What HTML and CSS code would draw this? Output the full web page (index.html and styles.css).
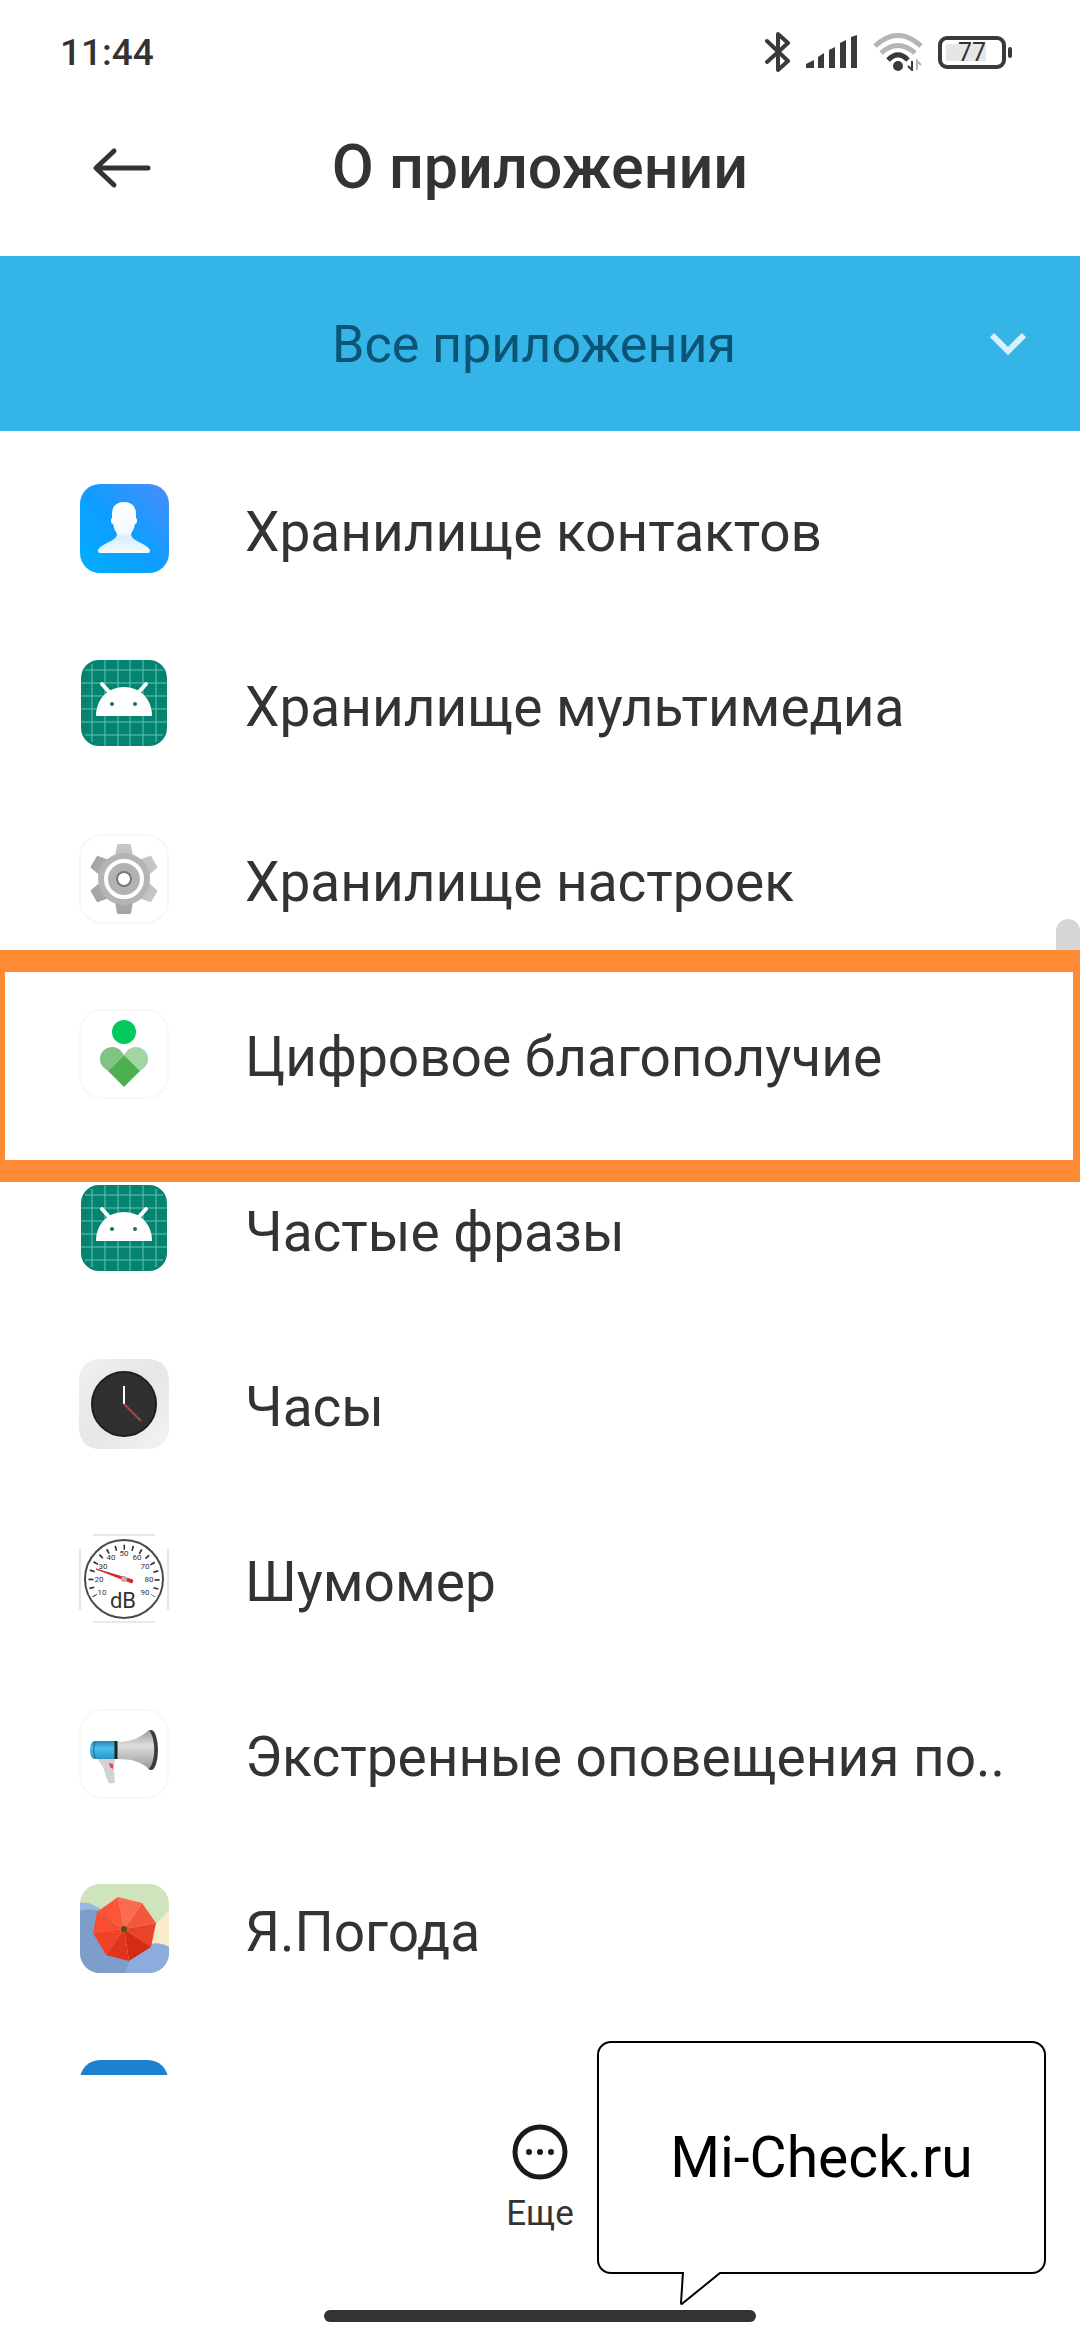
FILE: index.html
```html
<!DOCTYPE html>
<html lang="ru">
<head>
    <meta charset="UTF-8">
    <meta name="viewport" content="width=device-width, initial-scale=1">
    <title>О приложении</title>
    <link rel="stylesheet" href="styles.css">
</head>
<body>
    <div class="status-bar">
        <span class="time">11:44</span>
        <div class="status-icons">
            <svg class="bluetooth" width="26" height="44" viewBox="0 0 26 44">
                <path d="M2 11 L23 31 L13 40 V4 L23 13 L2 32" fill="none" stroke="#3a3a3a" stroke-width="4" stroke-linejoin="round" stroke-linecap="round"/>
            </svg>
            <svg class="signal" width="52" height="34" viewBox="0 0 52 34" fill="#3a3a3a">
                <path d="M0 29 L8 25 V33 H0z M12 22 L18 18 V33 H12z M23 15 L29 12 V33 H23z M34 8 L40 5 V33 H34z M45 2 L51 0 V33 H45z"/>
            </svg>
            <svg class="wifi" width="50" height="38" viewBox="0 0 50 38" fill="none" stroke-width="5">
                <path d="M2 13 Q25 -8 48 13" stroke="#b5b5b5"/>
                <path d="M8 20 Q25 5 42 20" stroke="#b5b5b5"/>
                <path d="M15 27 Q25 17 35 27" stroke="#3a3a3a"/>
                <circle cx="25" cy="33" r="5" fill="#3a3a3a" stroke="none"/>
                <path d="M39 28 V37 L35 33" stroke="#3a3a3a" stroke-width="2"/>
                <path d="M44 37 V28 L48 32" stroke="#b5b5b5" stroke-width="2"/>
            </svg>
            <div class="battery">77</div>
        </div>
    </div>

    <header class="title-bar">
        <button type="button" class="back" aria-label="Назад">
            <svg width="60" height="44" viewBox="0 0 60 44" fill="none" stroke="#333" stroke-width="5" stroke-linecap="round" stroke-linejoin="round">
                <path d="M22 5 L4 22 L22 39 M5 22 H56"/>
            </svg>
        </button>
        <h1>О приложении</h1>
    </header>

    <div class="filter">
        <select class="filter-select" aria-label="Фильтр приложений">
            <option>Все приложения</option>
        </select>
        <svg class="chevron" width="36" height="24" viewBox="0 0 36 24">
            <path d="M2 3 L18 19 L34 3" fill="none" stroke="#d9f1fc" stroke-width="6"/>
        </svg>
    </div>

    <main class="list-wrap">
        <div class="scroll-thumb"></div>
        <ul class="app-list">
            <li><a class="app" href="#">
                <svg class="app-icon" viewBox="0 0 90 90">
                    <defs>
                        <linearGradient id="contactBg" x1="0" y1="1" x2="1" y2="0">
                            <stop offset="0" stop-color="#00aeff"/>
                            <stop offset="0.5" stop-color="#0f9dff"/>
                            <stop offset="1" stop-color="#4c8dfb"/>
                        </linearGradient>
                        <linearGradient id="contactFg" x1="0" y1="0" x2="0" y2="1">
                            <stop offset="0" stop-color="#fff"/>
                            <stop offset="0.6" stop-color="#f2faff"/>
                            <stop offset="0.7" stop-color="#d8eefd"/>
                            <stop offset="1" stop-color="#f4fbff"/>
                        </linearGradient>
                    </defs>
                    <rect x="1" y="0" width="89" height="89" rx="20" fill="url(#contactBg)"/>
                    <path d="M45 18 C53 18 57 23 57 30 V34 C59 35 58 40 56 40 C55 45 53 48 52 50 C52 57 67 59 71 66 Q71 69 69 69 H21 Q19 69 19 66 C23 59 38 57 38 50 C37 48 35 45 34 40 C32 40 31 35 33 34 V30 C33 23 37 18 45 18z" fill="url(#contactFg)"/>
                </svg>
                <span class="app-name">Хранилище контактов</span>
            </a></li>
            <li><a class="app" href="#">
                <svg class="app-icon" viewBox="0 0 90 90">
                    <g id="android">
                        <rect x="2" y="1" width="86" height="86" rx="18" fill="#058371"/>
                        <path d="M13 5 V83 M26 1 V87 M39 1 V87 M51 1 V87 M64 1 V87 M77 5 V83 M6 11 H84 M2 24 H88 M2 37 H88 M2 50 H88 M2 63 H88 M6 76 H84" stroke="#67c4b3" stroke-width="1"/>
                        <path d="M17 57 C17 39 30 28 45 28 S73 39 73 57z" fill="#fff"/>
                        <path d="M23 25 L31 34 M67 25 L59 34" stroke="#fff" stroke-width="4" stroke-linecap="round"/>
                        <circle cx="33" cy="45" r="2" fill="#1f6f62"/>
                        <circle cx="56" cy="45" r="2" fill="#1f6f62"/>
                    </g>
                </svg>
                <span class="app-name">Хранилище мультимедиа</span>
            </a></li>
            <li><a class="app" href="#">
                <svg class="app-icon" viewBox="0 0 90 90">
                    <defs>
                        <linearGradient id="gearBg" x1="0" y1="0" x2="0" y2="1">
                            <stop offset="0" stop-color="#c6c6c6"/>
                            <stop offset="1" stop-color="#a4a4a4"/>
                        </linearGradient>
                    </defs>
                    <rect x="1" y="1" width="88" height="88" rx="22" fill="#fff" stroke="#f7f7f7" stroke-width="2"/>
                    <g fill="url(#gearBg)">
                        <path id="tooth" d="M36 22 L38 11 Q38 10 40 10 H50 Q52 10 52 11 L54 22 V68 L52 79 Q52 80 50 80 H40 Q38 80 38 79 L36 68z"/>
                        <use href="#tooth" transform="rotate(60 45 45)"/>
                        <use href="#tooth" transform="rotate(120 45 45)"/>
                    </g>
                    <circle cx="45" cy="45" r="26" fill="#b4b4b4"/>
                    <circle cx="45" cy="45" r="18" fill="#b2b2b2" stroke="#fff" stroke-width="4"/>
                    <circle cx="45" cy="45" r="7" fill="#fff" stroke="#777" stroke-width="2"/>
                </svg>
                <span class="app-name">Хранилище настроек</span>
            </a></li>
            <li class="marked"><a class="app" href="#">
                <svg class="app-icon" viewBox="0 0 90 90">
                    <rect x="1" y="1" width="88" height="88" rx="22" fill="#fff" stroke="#f8f8f8" stroke-width="2"/>
                    <circle cx="45" cy="23" r="12" fill="#04c95b"/>
                    <path d="M45 46 L42 42 A12 12 0 0 0 24 58 L29 62z" fill="#80c483"/>
                    <path d="M45 46 L48 42 A12 12 0 0 1 66 58 L61 62z" fill="#a2d4a4"/>
                    <path d="M45 46 L61 62 L45 78 L29 62z" fill="#4caf50"/>
                </svg>
                <span class="app-name">Цифровое благополучие</span>
            </a></li>
            <li><a class="app" href="#">
                <svg class="app-icon" viewBox="0 0 90 90"><use href="#android"/></svg>
                <span class="app-name">Частые фразы</span>
            </a></li>
            <li><a class="app" href="#">
                <svg class="app-icon" viewBox="0 0 90 90">
                    <defs>
                        <linearGradient id="clockBg" x1="0" y1="0" x2="1" y2="1">
                            <stop offset="0" stop-color="#f0f0f0"/>
                            <stop offset="0.5" stop-color="#e6e6e6"/>
                            <stop offset="1" stop-color="#f3f3f3"/>
                        </linearGradient>
                    </defs>
                    <rect width="90" height="90" rx="20" fill="url(#clockBg)"/>
                    <circle cx="45" cy="45" r="32" fill="#303030" stroke="#1e1e1e" stroke-width="2"/>
                    <path d="M45 45 V27" stroke="#fff" stroke-width="2"/>
                    <path d="M45 45 L62 62" stroke="#b04048" stroke-width="2"/>
                </svg>
                <span class="app-name">Часы</span>
            </a></li>
            <li><a class="app" href="#">
                <svg class="app-icon" viewBox="0 0 90 90">
                    <rect x="1" y="1" width="88" height="88" rx="20" fill="#fff"/>
                    <path d="M14 1 H76 M14 88 H76 M1 14 V76 M89 14 V76" stroke="#cfcfcf" stroke-width="1"/>
                    <circle cx="45" cy="45" r="39" fill="#fff" stroke="#4a4a4a" stroke-width="2"/>
                    <path d="M16 62 A33 33 0 1 1 74 62" fill="none" stroke="#333" stroke-width="5" pathLength="240" stroke-dasharray="3 12" stroke-dashoffset="1"/>
                    <g class="dial">
                        <text x="23" y="61">10</text>
                        <text x="20" y="48">20</text>
                        <text x="24" y="35">30</text>
                        <text x="32" y="26">40</text>
                        <text x="45" y="22">50</text>
                        <text x="58" y="26">60</text>
                        <text x="66" y="35">70</text>
                        <text x="70" y="48">80</text>
                        <text x="66" y="61">90</text>
                    </g>
                    <path d="M17 35 L54 46 L53 49z" fill="#d9252c" stroke="#d9252c"/>
                    <circle cx="45" cy="45" r="3" fill="#c9a5a5"/>
                    <text class="dial-unit" x="44" y="74">dB</text>
                </svg>
                <span class="app-name">Шумомер</span>
            </a></li>
            <li><a class="app" href="#">
                <svg class="app-icon" viewBox="0 0 90 90">
                    <defs>
                        <linearGradient id="hornBg" x1="0" y1="0" x2="0" y2="1">
                            <stop offset="0" stop-color="#9b9b9b"/>
                            <stop offset="0.4" stop-color="#dedede"/>
                            <stop offset="1" stop-color="#9a9a9a"/>
                        </linearGradient>
                        <linearGradient id="hornBody" x1="0" y1="0" x2="0" y2="1">
                            <stop offset="0" stop-color="#2c86b0"/>
                            <stop offset="0.4" stop-color="#49bfee"/>
                            <stop offset="1" stop-color="#2b93c4"/>
                        </linearGradient>
                    </defs>
                    <rect x="1" y="1" width="88" height="88" rx="22" fill="#fff" stroke="#f8f8f8" stroke-width="2"/>
                    <path d="M18 49 H36 L35 61 L36 73 Q32 76 29 73 L24 58z" fill="#d2d2d2"/>
                    <path d="M30 54 L34 55 L34 60 L31 58z" fill="#e0414b"/>
                    <ellipse cx="72" cy="41" rx="7" ry="20" fill="#3c3c3c"/>
                    <path d="M38 33 C54 33 62 28 70 21 C77 30 77 52 70 60 C62 53 54 50 38 50z" fill="url(#hornBg)"/>
                    <path d="M15 32 H38 V50 H15 Q11 48 11 41 Q11 34 15 32z" fill="url(#hornBody)"/>
                    <path d="M37 32 V50" stroke="#222" stroke-width="3"/>
                    <path d="M16 33 Q13 41 16 49" fill="none" stroke="#24658a"/>
                </svg>
                <span class="app-name">Экстренные оповещения по..</span>
            </a></li>
            <li><a class="app" href="#">
                <svg class="app-icon" viewBox="0 0 90 90">
                    <defs>
                        <clipPath id="weatherClip"><rect x="1" y="0" width="89" height="89" rx="20"/></clipPath>
                    </defs>
                    <g clip-path="url(#weatherClip)">
                        <rect width="90" height="90" fill="#cfe3bd"/>
                        <path d="M0 19 C14 17 30 28 40 50 L56 90 H0z" fill="#7d9dcb"/>
                        <path d="M0 19 C10 18 17 21 22 27 C13 25 6 25 0 27z" fill="#9bb8e4"/>
                        <path d="M90 26 L70 48 V62 H90z" fill="#fbecc9"/>
                        <path d="M46 90 C52 66 72 52 90 63 V90z" fill="#8dabdc"/>
                        <path d="M39 13 L63 19 L45 45z" fill="#fb6b50"/>
                        <path d="M63 19 L77 39 L45 45z" fill="#f4583c"/>
                        <path d="M77 39 L72 63 L45 45z" fill="#e94429"/>
                        <path d="M72 63 L50 77 L45 45z" fill="#d42c14"/>
                        <path d="M50 77 L27 71 L45 45z" fill="#e1351b"/>
                        <path d="M27 71 L14 49 L45 45z" fill="#f04225"/>
                        <path d="M14 49 L18 28 L45 45z" fill="#f94d32"/>
                        <path d="M18 28 L39 13 L45 45z" fill="#fb553a"/>
                        <circle cx="45" cy="45" r="3" fill="#5b4a1e"/>
                    </g>
                </svg>
                <span class="app-name">Я.Погода</span>
            </a></li>
            <li><a class="app" href="#" aria-label="Приложение">
                <svg class="app-icon" viewBox="0 0 90 90">
                    <rect x="1" y="1" width="88" height="87" rx="20" fill="#1b80d0"/>
                </svg>
            </a></li>
        </ul>
    </main>

    <footer class="bottom-bar">
        <button type="button" class="more">
            <svg width="56" height="56" viewBox="0 0 56 56">
                <circle cx="28" cy="28" r="25" fill="none" stroke="#1a1a1a" stroke-width="5"/>
                <circle cx="17" cy="28" r="3" fill="#1a1a1a"/>
                <circle cx="28" cy="28" r="3" fill="#1a1a1a"/>
                <circle cx="39" cy="28" r="3" fill="#1a1a1a"/>
            </svg>
            Еще
        </button>
        <div class="home-line"></div>
        <div class="bubble">
            Mi-Check.ru
            <svg class="bubble-tail" width="44" height="34" viewBox="0 0 44 34">
                <path d="M4 0 L2 31 Q2 33 4 31 L41 1 V0z" fill="#fff"/>
                <path d="M4 0 L2 31 Q2 33 4 31 L41 1 H44" fill="none" stroke="#000" stroke-width="2"/>
            </svg>
        </div>
    </footer>
</body>
</html>
```
FILE: styles.css
```css
* {
    box-sizing: border-box;
}

body {
    margin: 0;
    height: 100vh;
    display: flex;
    flex-direction: column;
    background: #fff;
    color: #333;
    font-family: Roboto, sans-serif;
}

button {
    border: none;
    background: none;
    padding: 0;
    color: inherit;
    font-family: inherit;
    cursor: pointer;
}

/* status bar */
.status-bar {
    flex: none;
    height: 104px;
    padding: 0 68px 0 60px;
    display: flex;
    justify-content: space-between;
    align-items: center;
}

.time {
    font-size: 37px;
    font-weight: 500;
}

.status-icons {
    display: flex;
    align-items: center;
    gap: 15px;
}

.battery {
    position: relative;
    width: 68px;
    height: 33px;
    margin-right: 6px;
    border: 4px solid #3a3a3a;
    border-radius: 9px;
    background: linear-gradient(to right, #e6e6e6 77%, #fff 77%) content-box;
    padding: 4px;
    font-size: 25px;
    line-height: 18px;
    text-align: center;
}

.battery::after {
    content: "";
    position: absolute;
    right: -10px;
    top: 7px;
    width: 4px;
    height: 11px;
    border-radius: 2px;
    background: #3a3a3a;
}

/* title */
.title-bar {
    flex: none;
    height: 128px;
    margin-bottom: 24px;
    padding: 0 92px;
    display: grid;
    grid-template-columns: 60px 1fr 60px;
    align-items: center;
}

.back {
    display: flex;
}

h1 {
    margin: 0;
    padding-bottom: 2px;
    font-size: 61px;
    font-weight: 500;
    text-align: center;
    white-space: nowrap;
}

/* drop-down */
.filter {
    flex: none;
    position: relative;
    height: 175px;
    background: #34b4e7;
}

.filter-select {
    appearance: none;
    width: 100%;
    height: 100%;
    padding: 2px 12px 0 0;
    border: none;
    background: none;
    color: #0b5475;
    font-family: inherit;
    font-size: 52px;
    text-align: center;
    text-align-last: center;
}

.chevron {
    position: absolute;
    top: 76px;
    right: 54px;
    pointer-events: none;
}

/* list */
.list-wrap {
    position: relative;
    flex: 1;
    min-height: 0;
    padding-top: 10px;
    overflow: hidden;
}

.app-list {
    margin: 0;
    padding: 0;
    list-style: none;
}

.app {
    position: relative;
    height: 175px;
    padding: 0 79px;
    display: flex;
    align-items: center;
    gap: 76px;
    color: inherit;
    text-decoration: none;
}

.app-icon {
    flex: none;
    width: 90px;
    height: 90px;
}

.app-name {
    padding-top: 7px;
    font-size: 55px;
    white-space: nowrap;
}

.dial {
    font-size: 8px;
    fill: #333;
    text-anchor: middle;
}

.dial-unit {
    font-size: 22px;
    fill: #333;
    text-anchor: middle;
}

.marked {
    position: relative;
}

.marked::before {
    content: "";
    position: absolute;
    top: -16px;
    bottom: -41px;
    left: 0;
    right: 0;
    border: 22px solid #ff8a34;
    border-left-width: 5px;
    border-right-width: 7px;
    background: #fff;
}

.scroll-thumb {
    position: absolute;
    top: 488px;
    right: 0;
    width: 24px;
    height: 160px;
    border-radius: 12px;
    background: #d6d6d6;
}

/* bottom */
.bottom-bar {
    flex: none;
    position: relative;
    height: 265px;
    padding: 49px 0 18px;
    display: flex;
    flex-direction: column;
    justify-content: space-between;
    align-items: center;
}

.more {
    display: flex;
    flex-direction: column;
    align-items: center;
    gap: 14px;
    font-size: 35px;
    line-height: 40px;
}

.home-line {
    width: 40%;
    height: 12px;
    border-radius: 6px;
    background: #333;
}

.bubble {
    position: absolute;
    right: 34px;
    bottom: 66px;
    width: 449px;
    height: 233px;
    display: flex;
    justify-content: center;
    align-items: center;
    border: 2px solid #000;
    border-radius: 14px;
    background: #fff;
    color: #000;
    font-size: 57px;
}

.bubble-tail {
    position: absolute;
    left: 80px;
    top: 229px;
}
```
